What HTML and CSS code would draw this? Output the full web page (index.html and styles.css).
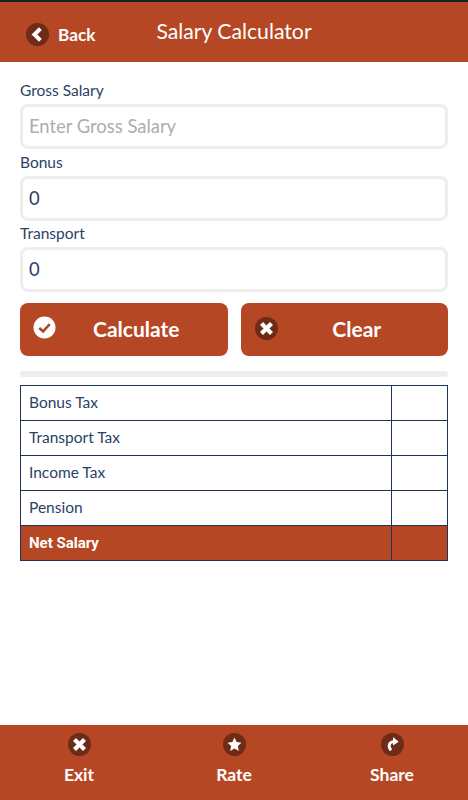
FILE: index.html
```html
<!DOCTYPE html>
<html lang="en">
<head>
    <meta charset="UTF-8">
    <meta name="viewport" content="width=device-width, initial-scale=1.0">
    <title>Salary Calculator</title>
    <link rel="stylesheet" href="styles.css">
</head>
<body>
    <div class="page">
        <!-- Header -->
        <header class="header">
            <a class="back">
                <svg class="icon" viewBox="0 0 24 24"><circle cx="12" cy="12" r="12" fill="#6e2c18"/><path d="M15 5.800 8.800 12l6.200 6.200" fill="none" stroke="#fff" stroke-width="4.200"/></svg>
                <span>Back</span>
            </a>
            <h1>Salary Calculator</h1>
        </header>

        <!-- Form -->
        <main class="content">
            <div class="form-group">
                <label for="gross">Gross Salary</label>
                <input type="text" id="gross" placeholder="Enter Gross Salary">
            </div>
            <div class="form-group">
                <label for="bonus">Bonus</label>
                <input type="text" id="bonus" value="0">
            </div>
            <div class="form-group">
                <label for="transport">Transport</label>
                <input type="text" id="transport" value="0">
            </div>

            <div class="buttons">
                <button class="btn">
                    <svg class="icon btn-icon btn-icon-check" viewBox="0 0 24 24"><circle cx="12" cy="12" r="11.500" fill="#fff"/><path d="M6.500 12.500l4 3.500 7-7.500" fill="none" stroke="#b64725" stroke-width="2.800"/></svg>
                    Calculate
                </button>
                <button class="btn">
                    <svg class="icon btn-icon" viewBox="0 0 24 24"><circle cx="12" cy="12" r="12" fill="#6e2c18"/><path d="M6.800 6.800l10.400 10.400M17.200 6.800 6.800 17.200" fill="none" stroke="#fff" stroke-width="4.400"/></svg>
                    Clear
                </button>
            </div>

            <div class="divider"></div>

            <table class="results">
                <tr><td>Bonus Tax</td><td></td></tr>
                <tr><td>Transport Tax</td><td></td></tr>
                <tr><td>Income Tax</td><td></td></tr>
                <tr><td>Pension</td><td></td></tr>
                <tr class="total"><td>Net Salary</td><td></td></tr>
            </table>
        </main>

        <!-- Footer -->
        <footer class="footer">
            <a class="tab tab-exit">
                <svg class="icon" viewBox="0 0 24 24"><circle cx="12" cy="12" r="12" fill="#6e2c18"/><path d="M6.800 6.800l10.400 10.400M17.200 6.800 6.800 17.200" fill="none" stroke="#fff" stroke-width="4.400"/></svg>
                <span>Exit</span>
            </a>
            <a class="tab tab-rate">
                <svg class="icon" viewBox="0 0 24 24"><circle cx="12" cy="12" r="12" fill="#6e2c18"/><path d="M12 4.800l2.200 4.700 5.100.6-3.800 3.500 1 5.100-4.500-2.500-4.500 2.500 1-5.100-3.800-3.500 5.100-.6z" fill="#fff"/></svg>
                <span>Rate</span>
            </a>
            <a class="tab tab-share">
                <svg class="icon" viewBox="0 0 24 24"><circle cx="12" cy="12" r="12" fill="#6e2c18"/><path d="M13.500 9c-4.500 0-7 4.500-3 9" fill="none" stroke="#fff" stroke-width="3"/><path d="M12.500 4.300l6 4.700-6 4z" fill="#fff"/></svg>
                <span>Share</span>
            </a>
        </footer>
    </div>
</body>
</html>
```

FILE: styles.css
```css
body {
    font-family: 'Lato', sans-serif;
    margin: 0;
    padding: 0;
    background: #ffffff;
    color: #2a4365;
}

.page {
    height: 800px;
    display: flex;
    flex-direction: column;
}

.icon {
    width: 23px;
    height: 23px;
    display: block;
    flex: none;
}

.header {
    height: 60px;
    border-top: 2px solid #14242b;
    background: #b64725;
    color: #ffffff;
    display: flex;
    align-items: flex-start;
}

.back {
    display: flex;
    align-items: center;
    gap: 9px;
    margin: 21px 0 0 26px;
    font-size: 17.200px;
    font-weight: 700;
}

.header h1 {
    margin: 16px 0 0 61px;
    font-size: 21.200px;
    line-height: 27px;
    font-weight: 400;
}

.content {
    flex: 1;
    padding: 17px 20px 0;
}

.form-group {
    margin-bottom: 1.500px;
}

.form-group label {
    display: block;
    margin-bottom: 3px;
    font-size: 15.500px;
    line-height: 22px;
}

.form-group input {
    display: block;
    width: 100%;
    height: 45px;
    box-sizing: border-box;
    padding: 0 6px 1px;
    border: 3px solid #eeeeee;
    border-radius: 8px;
    font-family: inherit;
    font-size: 18.400px;
    color: #2a4365;
    outline: none;
}

.form-group input::placeholder {
    color: #adadad;
}

.buttons {
    display: flex;
    gap: 13px;
    margin-top: 10.500px;
}

.btn {
    flex: 1;
    height: 53px;
    position: relative;
    background: #b64725;
    color: #ffffff;
    border: none;
    border-radius: 8px;
    font-family: inherit;
    font-size: 21px;
    font-weight: 700;
    padding: 0 0 2px 25px;
}

.btn-icon {
    position: absolute;
    left: 14px;
    top: 14px;
}

.btn-icon-check {
    left: 13px;
    top: 13px;
}

.divider {
    height: 6px;
    margin-top: 15px;
    background: #eeeeee;
    border-radius: 3px;
}

.results {
    width: 100%;
    margin-top: 8px;
    border-collapse: collapse;
    table-layout: fixed;
    font-size: 15.500px;
}

.results td {
    height: 32px;
    padding: 0 8px 2px;
    border: 1px solid #1f3557;
}

.results td:last-child {
    width: 56px;
    box-sizing: border-box;
}

.results .total td {
    height: 34px;
    padding-bottom: 0;
    background: #b64725;
    color: #ffffff;
    font-family: 'Roboto', sans-serif;
    font-weight: 700;
    font-size: 15px;
}

.footer {
    height: 74px;
    border-top: 1px solid #c23b1a;
    background: #b64725;
    color: #ffffff;
    display: flex;
    font-size: 17.500px;
    font-weight: 700;
}

.tab {
    display: flex;
    flex-direction: column;
    align-items: center;
    gap: 8px;
    padding-top: 7px;
}

.tab-exit {
    width: 158px;
}

.tab-rate {
    width: 152px;
}

.tab-share {
    flex: 1;
    padding-left: 6px;
}
```
